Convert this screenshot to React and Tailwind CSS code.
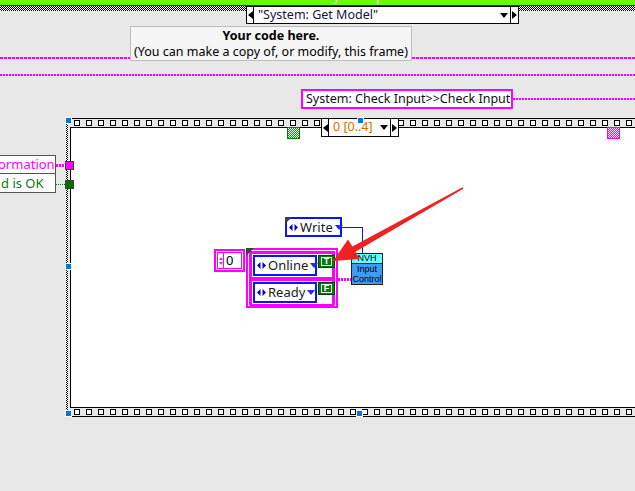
import React from 'react';

const FONT = "font-['Noto_Sans',sans-serif]";

const Handle = ({ className }) => (
  <div className={`absolute w-[7px] h-[7px] bg-[#0078d7] border border-white ${className}`} />
);

const FilmStrip = ({ count, start }) => (
  <div className="h-[10px] border-y border-black bg-[#e8e8e8] flex items-center gap-[6px] overflow-hidden" style={{ paddingLeft: start }}>
    {Array.from({ length: count }).map((_, i) => (
      <div key={i} className="w-[6px] h-[6px] shrink-0 border border-black bg-white" />
    ))}
  </div>
);

const Selector = ({ className, textClass, text }) => (
  <div className={`absolute flex border border-black bg-white ${className}`}>
    <div className="w-[7px] border-r border-black flex items-center justify-center">
      <div className="w-0 h-0 border-y-[4px] border-y-transparent border-r-[5px] border-r-black" />
    </div>
    <div className={`flex-1 pl-[4px] flex items-center text-[12.5px] leading-none whitespace-nowrap ${textClass}`}>{text}</div>
    <div className="w-[12px] flex items-center justify-center">
      <div className="w-0 h-0 border-x-[4px] border-x-transparent border-t-[5px] border-t-black" />
    </div>
    <div className="w-[8px] border-l border-black flex items-center justify-center">
      <div className="w-0 h-0 border-y-[4px] border-y-transparent border-l-[5px] border-l-black" />
    </div>
  </div>
);

const EnumArrows = () => (
  <svg width="9" height="7" viewBox="0 0 9 7" className="shrink-0">
    <polygon points="0,3.5 3.5,0 3.5,7" fill="#0000c0" />
    <polygon points="9,3.5 5.5,0 5.5,7" fill="#0000c0" />
  </svg>
);

const Corner = () => (
  <div className="absolute -left-[2px] -top-[2px] w-[7px] h-[7px] bg-[#404040] [clip-path:polygon(0_0,100%_0,0_100%)]" />
);

const EnumConst = ({ className, text, corner = true }) => (
  <div className={`relative border-2 border-[#0a14ff] bg-white flex items-center pl-[2px] pr-[3px] gap-[2px] ${className}`}>
    {corner && <Corner />}
    <EnumArrows />
    <span className="flex-1 text-[13px] leading-none text-[#1a1a1a] whitespace-nowrap">{text}</span>
    <div className="w-0 h-0 border-x-[4px] border-x-transparent border-t-[5px] border-t-[#1a2cff]" />
  </div>
);

const BoolConst = ({ letter }) => (
  <div className="w-[17px] h-[13px] bg-[#0a7a0a] border border-[#004800] flex items-center justify-center">
    <div className="w-[11px] h-[9px] border border-[#e8f8e8] flex items-center justify-center text-[9px] leading-none font-bold text-white font-['Liberation_Sans',sans-serif]">{letter}</div>
  </div>
);

const ClusterRow = ({ text, letter }) => (
  <div className="border-2 border-[#ff00ff] p-[1px] flex gap-[1px] bg-white h-[27px]">
    <EnumConst className="w-[64px] h-[21px]" text={text} corner={false} />
    <div className="flex flex-col">
      <BoolConst letter={letter} />
      <div className="flex-1" />
    </div>
  </div>
);

export default function App() {
  return (
    <div className={`relative w-[635px] h-[491px] overflow-hidden bg-[#e8e8e8] ${FONT}`}>
      {/* top case structure border */}
      <div className="absolute left-0 top-0 w-full h-[5px] bg-[#66ff00] overflow-hidden">
        <span className="absolute left-[333px] -top-[12px] text-[14px] text-white leading-none">y</span>
        <span className="absolute left-[376px] -top-[12px] text-[14px] text-white leading-none">p</span>
      </div>
      <div className="absolute left-0 top-[5px] w-full h-[6px] border-t border-[#303030] bg-[repeating-conic-gradient(#000_0_25%,#fff_0_50%)] bg-[length:2px_2px]" />

      <Selector className="left-[246px] top-[6px] w-[273px] h-[18px]" textClass="text-[#14143c]" text={'"System: Get Model"'} />

      {/* comment */}
      <div className="absolute left-[130px] top-[26px] w-[282px] h-[35px] bg-[#f5f5f5] border border-[#bdbdbd] flex flex-col items-center justify-center text-[12.5px] leading-[16px] text-black whitespace-nowrap">
        <span className="font-bold">Your code here.</span>
        <span>(You can make a copy of, or modify, this frame)</span>
      </div>

      {/* wires */}
      <div className="absolute left-0 top-[57px] w-[130px] h-[2px] bg-[repeating-linear-gradient(90deg,#ff00ff_0_3px,#ffc8ff_3px_4px)]" />
      <div className="absolute left-[412px] top-[57px] w-[223px] h-[2px] bg-[repeating-linear-gradient(90deg,#ff00ff_0_3px,#ffc8ff_3px_4px)]" />
      <div className="absolute left-0 top-[74px] w-full h-[2px] bg-[repeating-linear-gradient(90deg,#ff00ff_0_2px,#ffc8ff_2px_3px)]" />

      <div className="absolute left-[301px] top-[89px] w-[212px] h-[20px] border-2 border-[#ff00ff] bg-white flex items-center pl-[3px] text-[12.5px] leading-none text-[#111] whitespace-nowrap overflow-hidden">
        System: Check Input&gt;&gt;Check Input
      </div>
      <div className="absolute left-[513px] top-[98px] w-[122px] h-[2px] bg-[repeating-linear-gradient(90deg,#ff00ff_0_2px,#ffc8ff_2px_3px)]" />

      {/* left labels */}
      <div className="absolute -left-[1px] top-[155px] w-[57px] h-[38px] border border-[#555] bg-white flex flex-col text-[13px] leading-none overflow-hidden whitespace-nowrap">
        <div className="h-[18px] border-b border-[#555] flex items-center text-[#ff00ff]"><span className="-ml-[2px]">ormation</span></div>
        <div className="flex-1 flex items-center text-[#0a7a0a]"><span className="ml-[1px]">d is OK</span></div>
      </div>
      <div className="absolute left-[56px] top-[164px] w-[9px] h-[3px] bg-[repeating-linear-gradient(90deg,#ff00ff_0_2px,#fff_2px_3px)]" />
      <div className="absolute left-[56px] top-[184px] w-[9px] h-[1px] bg-[repeating-linear-gradient(90deg,#0a7a0a_0_1px,transparent_1px_2px)]" />

      {/* sequence frame */}
      <div className="absolute left-[66px] top-[123px] w-[2px] h-[288px] bg-[repeating-conic-gradient(#000_0_25%,#fff_0_50%)] bg-[length:2px_2px]" />
      <div className="absolute left-[70px] top-[118px] w-[580px] h-[299px] flex flex-col">
        <FilmStrip count={48} start={4} />
        <div className="flex-1 bg-white border-l border-black" />
        <FilmStrip count={48} start={4} />
      </div>

      <div className="absolute left-[65px] top-[161px] w-[9px] h-[9px] bg-[#ff00ff] border border-[#404040]" />
      <div className="absolute left-[65px] top-[180px] w-[9px] h-[9px] bg-[#006e00] border border-[#404040]" />

      <Selector className="left-[321px] top-[118px] w-[78px] h-[19px]" textClass="text-[#d07000]" text="0 [0..4]" />

      <div className="absolute left-[287px] top-[127px] w-[13px] h-[12px] border border-[#008000] bg-[repeating-conic-gradient(#0a9a0a_0_25%,#fff_0_50%)] bg-[length:2px_2px]" />
      <div className="absolute left-[607px] top-[127px] w-[13px] h-[12px] border border-[#ff00ff] bg-[repeating-conic-gradient(#ff00ff_0_25%,#fff_0_50%)] bg-[length:2px_2px]" />

      <Handle className="left-[65px] top-[117px]" />
      <Handle className="left-[357px] top-[117px]" />
      <Handle className="left-[65px] top-[263px]" />
      <Handle className="left-[65px] top-[410px]" />
      <Handle className="left-[356px] top-[410px]" />

      {/* diagram */}
      <div className="absolute left-[342px] top-[227px] w-[21px] h-[26px] border-t border-r border-[#1020a0]" />
      <EnumConst className="absolute left-[285px] top-[217px] w-[57px] h-[20px]" text="Write" />

      <div className="absolute left-[214px] top-[249px] w-[31px] h-[23px] border-2 border-[#ff00ff] p-[1px] bg-white">
        <div className="w-full h-full border border-[#ff00ff] flex items-center">
          <div className="w-[6px] h-full border-r border-[#ff00ff] flex flex-col items-center justify-center gap-[2px]">
            <div className="w-0 h-0 border-x-[2px] border-x-transparent border-b-[3px] border-b-[#c040c0]" />
            <div className="w-0 h-0 border-x-[2px] border-x-transparent border-t-[3px] border-t-[#c040c0]" />
          </div>
          <span className="pl-[2px] text-[13px] leading-none text-black">0</span>
        </div>
      </div>

      <div className="absolute left-[246px] top-[248px] w-[92px] h-[60px] border-2 border-[#ff00ff] p-[1px] bg-white">
        <div className="w-full h-full border border-[#ff00ff] flex flex-col">
          <ClusterRow text="Online" letter="T" />
          <ClusterRow text="Ready" letter="F" />
        </div>
        <div className="absolute -left-[2px] -top-[2px] w-[8px] h-[8px] bg-[#404040] [clip-path:polygon(0_0,100%_0,0_100%)]" />
      </div>
      <div className="absolute left-[338px] top-[278px] w-[13px] h-[3px] bg-[repeating-linear-gradient(90deg,#ff00ff_0_2px,#fff_2px_3px)]" />

      <div className="absolute left-[351px] top-[253px] w-[32px] h-[32px] border border-[#202020] flex flex-col text-[9px] leading-[9px] text-black font-['Liberation_Sans',sans-serif]">
        <div className="h-[10px] bg-[#66ffff] border-b border-[#202020] flex items-center justify-center">NVH</div>
        <div className="flex-1 bg-[#3d9cf5] flex flex-col items-center justify-center gap-[1px]">
          <span>Input</span>
          <span>Control</span>
        </div>
      </div>

      {/* red arrow */}
      <svg className="absolute left-0 top-0 pointer-events-none" width="635" height="491" viewBox="0 0 635 491">
        <polygon points="463.4,188.7 355.4,251.8 359.5,259 333,261 348,239.5 352.4,246.6 462.6,187.3" fill="#ee2222" />
      </svg>
    </div>
  );
}
